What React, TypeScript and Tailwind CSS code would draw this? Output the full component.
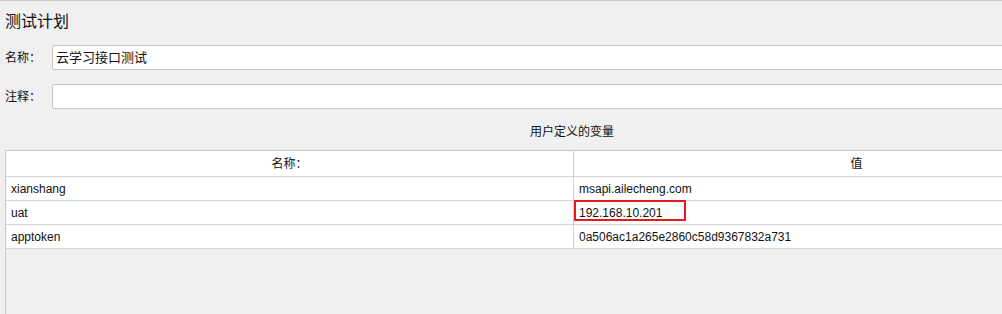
const rows = [
  { name: "xianshang", value: "msapi.ailecheng.com" },
  { name: "uat", value: "192.168.10.201", marked: true },
  { name: "apptoken", value: "0a506ac1a265e2860c58d9367832a731" },
];

function Field({ label, value }: { label: string; value?: string }) {
  return (
    <div className="flex items-center h-[25px]">
      <div className="w-[52px] shrink-0 pl-[5px] text-[12px]">{label}</div>
      <div className="h-[25px] w-[1000px] shrink-0 bg-white border border-[#c4c4c4] rounded-[2px] flex items-center pl-[3px] text-[13px]">
        {value}
      </div>
    </div>
  );
}

export default function App() {
  return (
    <div
      className="w-[1002px] h-[314px] overflow-hidden bg-[#f0f0f0] border-t border-[#c8c8c8] text-[#111]"
      style={{ fontFamily: '"Liberation Sans", "Noto Sans CJK SC", sans-serif' }}
    >
      <div className="pl-[5px] pt-[11px] h-[44px] text-[16px] leading-[20px]">测试计划</div>
      <Field label="名称：" value="云学习接口测试" />
      <div className="h-[14px]" />
      <Field label="注释：" />
      <div className="w-[1134px] ml-[5px]">
        <div className="h-[41px] flex items-center justify-center text-[12px] pt-[13px] pb-[8px]">用户定义的变量</div>
        <div className="border-l border-t border-[#c8c8c8] h-[200px]">
          <div className="bg-white text-[12px]">
            <div className="grid grid-cols-[568px_1fr] h-[26px] border-b border-[#d4d4d4]">
              <div className="flex items-center justify-center border-r border-[#d4d4d4]">名称：</div>
              <div className="flex items-center justify-center">值</div>
            </div>
            {rows.map((r) => (
              <div key={r.name} className="grid grid-cols-[568px_1fr] h-[24px] border-b border-[#d4d4d4]">
                <div className="flex items-center pl-[5px] border-r border-[#d4d4d4]">{r.name}</div>
                <div className="relative flex items-center pl-[5px]">
                  {r.value}
                  {r.marked && (
                    <div className="absolute left-0 top-[-1px] w-[112px] h-[21px] border-2 border-[#e8191e]" />
                  )}
                </div>
              </div>
            ))}
          </div>
        </div>
      </div>
    </div>
  );
}
